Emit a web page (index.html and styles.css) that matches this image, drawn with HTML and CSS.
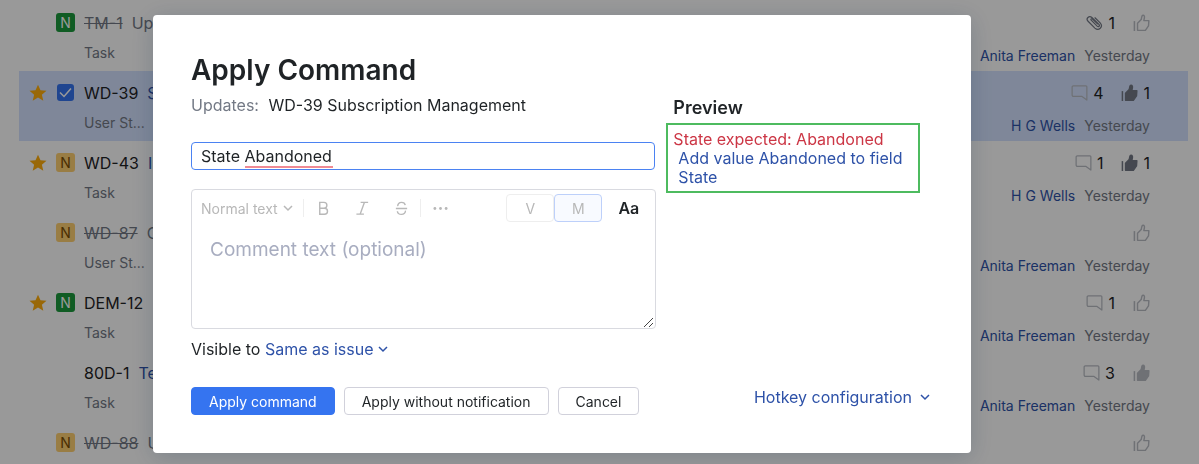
FILE: index.html
```
<!DOCTYPE html>
<html lang="en">
<head>
    <meta charset="UTF-8">
    <title>Apply Command</title>
    <link rel="stylesheet" href="styles.css">
</head>
<body>
    <!-- Shared icons -->
    <svg class="sprite" aria-hidden="true">
        <symbol id="star" viewBox="0 0 18 18">
            <path d="M9 .8l2.5 5.500 6 .5-4.600 4 1.400 6L9 13.600l-5.300 3.200 1.400-6L.5 6.800l6-.5z" fill="currentColor"/>
        </symbol>
        <symbol id="thumb" viewBox="0 0 18 18">
            <path d="M1.500 7v10.500" fill="none" stroke="currentColor" stroke-width="1.600"/>
            <path d="M4.800 9.300l3.900-4c.5-1.600.3-4.500 1.900-4.500 1.400 0 1.700 1.300 1.500 2.400L11.500 6.500h5.300l-.4 5.600-3.300 4.700H4.800z" fill="none" stroke="currentColor" stroke-width="1.500" stroke-linejoin="round"/>
        </symbol>
        <symbol id="thumb-full" viewBox="0 0 18 18">
            <path d="M1.500 7v10.500" fill="none" stroke="currentColor" stroke-width="1.600"/>
            <path d="M4.800 9.300l3.900-4c.5-1.600.3-4.500 1.900-4.500 1.400 0 1.700 1.300 1.500 2.400L11.500 6.500h5.300l-.4 5.600-3.300 4.700H4.800z" fill="currentColor" stroke="currentColor" stroke-width="1.500" stroke-linejoin="round"/>
        </symbol>
        <symbol id="comment" viewBox="0 0 18 18">
            <path d="M2.500 1.500h13.300a1 1 0 0 1 1 1v14l-5.500-4H2.500a1.300 1.300 0 0 1-1.300-1.300V2.800a1.300 1.300 0 0 1 1.300-1.300z" fill="none" stroke="currentColor" stroke-width="1.300" stroke-linejoin="round"/>
        </symbol>
        <symbol id="clip" viewBox="0 0 18 18">
            <path d="M5.500 6l6.300 6.300c1.500 1.300 3.200-.4 1.900-1.900L6.200 3.100C3.300.6-.6 4.300 2.200 7.200l7.200 7.200c4 3.600 9.300-1.200 5.600-5.500L9.500 3.500M5.500 6c-.8-1 .4-2.200 1.400-1.300l5.300 5.200" fill="none" stroke="currentColor" stroke-width="1.300" stroke-linecap="round"/>
        </symbol>
        <symbol id="chevron" viewBox="0 0 12 12">
            <path d="M2 4l4 4 4-4" fill="none" stroke="currentColor" stroke-width="1.500"/>
        </symbol>
    </svg>

    <ul class="issues">
        <li class="issue resolved">
            <span class="star"></span>
            <span class="priority green">N</span>
            <div class="info">
                <div class="line"><span class="id">TM-1</span><a class="summary" href="#">Up</a></div>
                <div class="type">Task</div>
            </div>
            <div class="meta">
                <div class="counts">
                    <span class="count"><svg class="icon dark"><use href="#clip"/></svg>1</span>
                    <span class="count"><svg class="icon"><use href="#thumb"/></svg></span>
                </div>
                <div class="updated"><a href="#">Anita Freeman</a><span>Yesterday</span></div>
            </div>
        </li>
        <li class="issue selected">
            <svg class="star"><use href="#star"/></svg>
            <input class="check" type="checkbox" aria-label="Select WD-39" checked>
            <div class="info">
                <div class="line"><span class="id">WD-39</span><a class="summary" href="#">S</a></div>
                <div class="type">User St...</div>
            </div>
            <div class="meta">
                <div class="counts">
                    <span class="count"><svg class="icon"><use href="#comment"/></svg>4</span>
                    <span class="count"><svg class="icon dark"><use href="#thumb-full"/></svg>1</span>
                </div>
                <div class="updated"><a href="#">H G Wells</a><span>Yesterday</span></div>
            </div>
        </li>
        <li class="issue">
            <svg class="star"><use href="#star"/></svg>
            <span class="priority yellow">N</span>
            <div class="info">
                <div class="line"><span class="id">WD-43</span><a class="summary" href="#">I</a></div>
                <div class="type">Task</div>
            </div>
            <div class="meta">
                <div class="counts">
                    <span class="count"><svg class="icon"><use href="#comment"/></svg>1</span>
                    <span class="count"><svg class="icon dark"><use href="#thumb-full"/></svg>1</span>
                </div>
                <div class="updated"><a href="#">H G Wells</a><span>Yesterday</span></div>
            </div>
        </li>
        <li class="issue resolved">
            <span class="star"></span>
            <span class="priority yellow">N</span>
            <div class="info">
                <div class="line"><span class="id">WD-87</span><a class="summary" href="#">C</a></div>
                <div class="type">User St...</div>
            </div>
            <div class="meta">
                <div class="counts">
                    <span class="count"><svg class="icon"><use href="#thumb"/></svg></span>
                </div>
                <div class="updated"><a href="#">Anita Freeman</a><span>Yesterday</span></div>
            </div>
        </li>
        <li class="issue">
            <svg class="star"><use href="#star"/></svg>
            <span class="priority green">N</span>
            <div class="info">
                <div class="line"><span class="id">DEM-12</span></div>
                <div class="type">Task</div>
            </div>
            <div class="meta">
                <div class="counts">
                    <span class="count"><svg class="icon"><use href="#comment"/></svg>1</span>
                    <span class="count"><svg class="icon"><use href="#thumb"/></svg></span>
                </div>
                <div class="updated"><a href="#">Anita Freeman</a><span>Yesterday</span></div>
            </div>
        </li>
        <li class="issue">
            <span class="star"></span>
            <span class="priority"></span>
            <div class="info">
                <div class="line"><span class="id">80D-1</span><a class="summary" href="#">Te</a></div>
                <div class="type">Task</div>
            </div>
            <div class="meta">
                <div class="counts">
                    <span class="count"><svg class="icon"><use href="#comment"/></svg>3</span>
                    <span class="count"><svg class="icon"><use href="#thumb-full"/></svg></span>
                </div>
                <div class="updated"><a href="#">Anita Freeman</a><span>Yesterday</span></div>
            </div>
        </li>
        <li class="issue resolved">
            <span class="star"></span>
            <span class="priority yellow">N</span>
            <div class="info">
                <div class="line"><span class="id">WD-88</span><a class="summary" href="#">U</a></div>
            </div>
            <div class="meta">
                <div class="counts">
                    <span class="count"><svg class="icon"><use href="#thumb"/></svg></span>
                </div>
            </div>
        </li>
    </ul>

    <div class="overlay">
        <form class="dialog" role="dialog" aria-labelledby="dialog-title">
            <div class="columns">
                <div class="main">
                    <h1 id="dialog-title">Apply Command</h1>
                    <p class="updates"><span>Updates:</span> WD-39 Subscription Management</p>

                    <div class="command">
                        <input type="text" aria-label="Command" value="State Abandoned" spellcheck="false">
                        <span class="error-mark"></span>
                    </div>

                    <div class="editor">
                        <div class="toolbar">
                            <button type="button" class="tool style">Normal text <svg class="chevron"><use href="#chevron"/></svg></button>
                            <button type="button" class="tool" aria-label="Bold">
                                <svg viewBox="0 0 16 16"><path d="M4 1.500h4.500a3 3 0 0 1 0 6.200H4zM4 7.700h5a3.200 3.200 0 0 1 0 6.500H4z"/></svg>
                            </button>
                            <button type="button" class="tool" aria-label="Italic">
                                <svg viewBox="0 0 16 16"><path d="M6 1.500h8M1.500 14h8M10 1.500L5.500 14"/></svg>
                            </button>
                            <button type="button" class="tool last" aria-label="Strikethrough">
                                <svg viewBox="0 0 16 16"><path d="M2 8h12M4 5.500C3.800 3.300 5.500 1.500 8 1.500c2.100 0 3.700 1.200 4 3M12.200 10.300c.2 2.300-1.600 4-4.200 4s-4.200-1.400-4.400-3.400"/></svg>
                            </button>
                            <button type="button" class="tool more" aria-label="More">
                                <svg viewBox="0 0 16 16"><circle cx="2" cy="8" r="1.500"/><circle cx="8" cy="8" r="1.500"/><circle cx="14" cy="8" r="1.500"/></svg>
                            </button>
                            <div class="mode">
                                <button type="button">V</button>
                                <button type="button" class="active">M</button>
                            </div>
                            <button type="button" class="font-toggle">Aa</button>
                        </div>
                        <textarea aria-label="Comment" placeholder="Comment text (optional)"></textarea>
                        <svg class="grip" viewBox="0 0 12 12"><path d="M1 11L10 2M6 11l4-4"/></svg>
                    </div>

                    <div class="visibility">
                        Visible to
                        <button type="button" class="link">Same as issue <svg class="chevron"><use href="#chevron"/></svg></button>
                    </div>
                </div>

                <div class="preview">
                    <h2>Preview</h2>
                    <div class="result">
                        <div class="error">State expected: Abandoned</div>
                        <a href="#">Add value Abandoned to field State</a>
                    </div>
                </div>
            </div>

            <div class="actions">
                <button type="submit" class="button primary">Apply command</button>
                <button type="button" class="button">Apply without notification</button>
                <button type="button" class="button">Cancel</button>
                <button type="button" class="link hotkey">Hotkey configuration <svg class="chevron"><use href="#chevron"/></svg></button>
            </div>
        </form>
    </div>
</body>
</html>
```
FILE: styles.css
```
* {
    box-sizing: border-box;
}

body {
    font-family: Inter, sans-serif;
    font-size: 16px;
    line-height: 20px;
    margin: 0;
    background-color: #fff;
    color: #1f2326;
}

button, input, textarea {
    font-family: inherit;
    color: inherit;
}

button {
    cursor: pointer;
}

a {
    color: #2e52a8;
    text-decoration: none;
}

.sprite {
    display: none;
}

/* Issue list */
.issues {
    list-style: none;
    margin: 0;
    padding: 1px 11px 0 19px;
}

.issue {
    display: flex;
    height: 70px;
    padding: 12px 38px 0 10px;
}

.issue:last-child {
    height: auto;
}

.issue.selected {
    background-color: #d4e2ff;
}

.star {
    width: 18px;
    height: 18px;
    margin: 1px 9px 0 0;
    color: #ffae0d;
}

.priority {
    width: 19px;
    height: 19px;
    margin-right: 9px;
    border-radius: 3px;
    font-size: 14px;
    line-height: 19px;
    text-align: center;
}

.priority.green {
    background-color: #1b9a3c;
    color: #fff;
}

.priority.yellow {
    background-color: #ffd072;
    color: #7a4d00;
}

.check {
    appearance: none;
    width: 17px;
    height: 17px;
    margin: 1px 10px 0 1px;
    border-radius: 3px;
    background: #3574f0 url("data:image/svg+xml,%3Csvg xmlns='http://www.w3.org/2000/svg' viewBox='0 0 17 17'%3E%3Cpath d='M3 8.500l4 4 7-8' fill='none' stroke='white' stroke-width='1.500'/%3E%3C/svg%3E");
}

.line {
    display: flex;
    gap: 9px;
}

.resolved .id {
    color: #737985;
    text-decoration: line-through;
}

.resolved .summary {
    color: #737985;
}

.type {
    margin-top: 10px;
    font-size: 14px;
    color: #737985;
}

.meta {
    margin-left: auto;
}

.counts {
    display: flex;
    justify-content: flex-end;
    gap: 18px;
    height: 20px;
}

.count {
    display: flex;
    align-items: center;
    gap: 5px;
}

.icon {
    width: 17px;
    height: 18px;
    color: #b9bcc4;
}

.icon.dark {
    color: #737985;
}

.updated {
    display: flex;
    justify-content: flex-end;
    gap: 9px;
    margin-top: 13px;
    font-size: 14px;
    color: #737985;
}

/* Dialog */
.overlay {
    position: fixed;
    inset: 0;
    padding: 15px 228px 11px 153px;
    background-color: rgba(0, 0, 0, 0.4);
}

.dialog {
    padding: 37px 38px 38px;
    border-radius: 4px;
    background-color: #fff;
    box-shadow: 0 4px 24px rgba(0, 42, 76, 0.2);
}

.columns {
    display: grid;
    grid-template-columns: 466fr 267fr;
    gap: 10px;
}

h1 {
    margin: 0;
    font-size: 28px;
    line-height: 36px;
    font-weight: 600;
}

.updates {
    margin: 7px 0 27px;
}

.updates span {
    margin-right: 5px;
    color: #737985;
}

.command {
    position: relative;
    margin-right: 1px;
}

.command input {
    display: block;
    width: 100%;
    height: 28px;
    padding: 0 9px;
    border: 1px solid #4b82f2;
    border-radius: 4px;
    font-size: 16px;
    outline: none;
}

/* underlines the unknown word */
.error-mark {
    position: absolute;
    left: 54px;
    bottom: 2px;
    width: 88px;
    height: 2px;
    background-color: #f08a93;
}

.editor {
    position: relative;
    margin-top: 19px;
    border: 1px solid #d9dae0;
    border-radius: 4px;
}

.toolbar {
    display: flex;
    align-items: center;
    height: 36px;
    padding-left: 9px;
    color: #b8b8b8;
}

.tool {
    display: flex;
    justify-content: center;
    align-items: center;
    width: 39px;
    height: 18px;
    padding: 0;
    border: none;
    background: none;
}

.tool svg {
    width: 15px;
    height: 15px;
    fill: none;
    stroke: currentColor;
    stroke-width: 1.5;
}

.tool.style {
    justify-content: flex-start;
    gap: 4px;
    width: 103px;
    border-right: 1px solid #eee;
    font-size: 14px;
}

.tool.style svg {
    width: 12px;
    height: 12px;
}

.tool.last {
    border-right: 1px solid #eee;
}

.tool.more svg {
    fill: currentColor;
    stroke: none;
}

.mode {
    display: flex;
    margin-left: auto;
}

.mode button {
    width: 48px;
    height: 28px;
    border: 1px solid #eee;
    border-radius: 4px;
    background: #fff;
    color: #b8b8b8;
    font-size: 14px;
}

.mode .active {
    border-color: #bdd0fa;
    background-color: #f8faff;
}

.font-toggle {
    width: 53px;
    padding: 0;
    border: none;
    background: none;
    color: #1f2326;
    font-size: 16px;
    font-weight: 600;
}

.editor textarea {
    display: block;
    width: 100%;
    height: 102px;
    padding: 13px 18px;
    border: none;
    background: none;
    font-size: 19px;
    line-height: 22px;
    outline: none;
    resize: none;
}

.editor textarea::placeholder {
    color: #a8adc0;
}

.grip {
    position: absolute;
    right: 0;
    bottom: 0;
    width: 12px;
    height: 12px;
    stroke: #444;
}

.visibility {
    margin-top: 10px;
}

.link {
    display: inline-flex;
    align-items: center;
    gap: 4px;
    padding: 0;
    border: none;
    background: none;
    color: #2e52a8;
    font-size: 16px;
    line-height: 20px;
}

.chevron {
    width: 12px;
    height: 12px;
}

.preview {
    padding: 46px 13px 0 0;
}

h2 {
    margin: 0 0 5px 7px;
    font-size: 18px;
    line-height: 20px;
    font-weight: 600;
}

.result {
    padding: 5px 5px 4px;
    border: 2px solid #4dbb5f;
    line-height: 19px;
}

.result .error {
    color: #cc3645;
}

.result a {
    display: block;
    margin-left: 5px;
}

.actions {
    display: flex;
    align-items: flex-start;
    gap: 9px;
    margin-top: 28px;
}

.button {
    height: 28px;
    padding: 0 17px;
    border: 1px solid #d1d1db;
    border-radius: 4px;
    background-color: #fff;
    font-size: 14px;
}

.button.primary {
    border-color: #3574f0;
    background-color: #3574f0;
    color: #fff;
}

.hotkey {
    gap: 7px;
    margin-left: auto;
    padding-right: 2px;
}
```
